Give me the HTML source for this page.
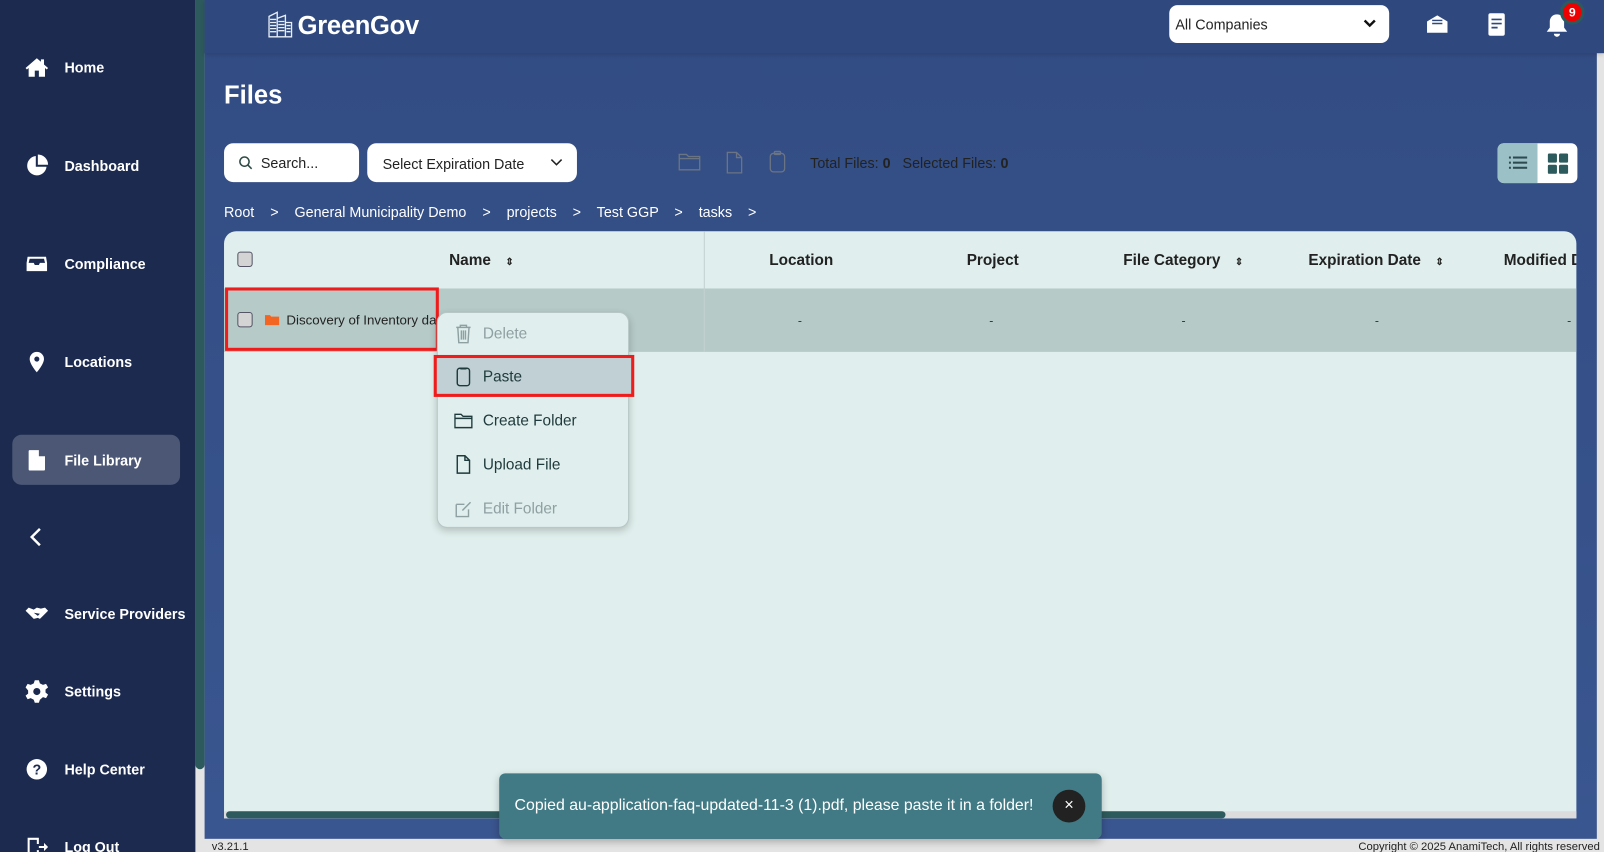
<!DOCTYPE html>
<html><head><meta charset="utf-8"><style>
*{box-sizing:border-box;margin:0;padding:0}
html,body{width:1604px;height:852px;overflow:hidden}
body{font-family:"Liberation Sans",Arial,sans-serif;background:#e4e4e4;position:relative}
#w{position:absolute;left:0;top:0;width:1568px;height:833px;transform:scale(1.02296);transform-origin:0 0}
.sb{position:absolute;left:0;top:0;width:191px;height:852px;background:#1c2a4f;color:#fff}
.sb .it{position:absolute;left:24px;display:flex;align-items:center;font-weight:bold;font-size:14px}
.sb .it svg{width:24px;height:24px;margin-right:15px;fill:#fff}
.strip{position:absolute;left:191px;top:0;width:9px;height:752px;background:#2d5a5c;border-radius:0 0 5px 5px}
.main{position:absolute;left:200px;top:0;width:1361px;height:820px;background:linear-gradient(180deg,#324c83,#3a5690)}
.hdr{position:absolute;left:200px;top:0;width:1368px;height:52px;background:#2f497f;box-shadow:0 2px 4px rgba(0,0,0,.15)}
.foot{position:absolute;top:820px;left:200px;width:1368px;height:32px;font-size:11px;color:#222}
.tbl{position:absolute;left:19px;top:226px;width:1322px;height:574px;background:#e0efed;border-radius:12px 12px 0 0;overflow:hidden}
.th{position:absolute;top:20px;font-weight:bold;font-size:15px;color:#222}
.cb{position:absolute;width:15px;height:15px;border:1px solid #556;border-radius:3px;background:#d4d4d4}
.dash{position:absolute;top:80px;font-size:12px;color:#333}
.menu{position:absolute;left:427px;top:305px;width:188px;height:211px;background:#e0efed;border:1px solid #b7c7c5;border-radius:10px;box-shadow:0 3px 8px rgba(0,0,0,.2)}
.mi{position:absolute;left:16px;display:flex;align-items:center;font-size:15px;color:#1f3a3c}
.mi svg{width:18px;height:20px;margin-right:10px;fill:none;stroke:currentColor;stroke-width:1.4}
</style></head><body><div id="w">
<div class="sb">
 <div class="it" style="top:54px"><svg viewBox="0 0 24 24"><path d="M12 3L1 12.5l1.3 1.4L4 12.5V21h6v-6h4v6h6v-8.5l1.7 1.4 1.3-1.4L19 9V4h-3v2.4z"/></svg>Home</div>
 <div class="it" style="top:150px"><svg viewBox="0 0 24 24"><path d="M11 2.5A9.5 9.5 0 1 0 21.5 13H11z"/><path d="M13 1v10h10A10 10 0 0 0 13 1z"/></svg>Dashboard</div>
 <div class="it" style="top:246px"><svg viewBox="0 0 24 24"><path d="M3 5h18l1 6v8H2v-8zm2 2l-1 4h5l1 2h4l1-2h5l-1-4z"/></svg>Compliance</div>
 <div class="it" style="top:342px"><svg viewBox="0 0 24 24"><path d="M12 2a7 7 0 0 0-7 7c0 5 7 13 7 13s7-8 7-13a7 7 0 0 0-7-7zm0 9.5a2.5 2.5 0 1 1 0-5 2.5 2.5 0 0 1 0 5z"/></svg>Locations</div>
 <div style="position:absolute;left:12px;top:425px;width:164px;height:49px;background:#4b5775;border-radius:9px"></div>
 <div class="it" style="top:438px"><svg viewBox="0 0 24 24"><path d="M5 2h9l6 6v13a1 1 0 0 1-1 1H5a1 1 0 0 1-1-1V3a1 1 0 0 1 1-1zm9 0v6h6"/></svg>File Library</div>
 <div class="it" style="top:513px"><svg viewBox="0 0 24 24" style="fill:none;stroke:#fff;stroke-width:2.4"><path d="M15 4l-8 8 8 8"/></svg></div>
 <div class="it" style="top:588px"><svg viewBox="0 0 24 24"><path d="M1 9l3-3 5 2 3-2 4 1 4-1 3 3-5 5-3 3-2-1-4 1-4-4zM9 11l4 3 2-2"/></svg>Service Providers</div>
 <div class="it" style="top:664px"><svg viewBox="0 0 24 24"><path d="M10 1h4l1 3 3 1.5 3-1 2 3.5-2.5 2v3l2.5 2-2 3.5-3-1L15 20l-1 3h-4l-1-3-3-1.5-3 1-2-3.5 2.5-2v-3L1 8l2-3.5 3 1L9 4zm2 7.5a3.5 3.5 0 1 0 0 7 3.5 3.5 0 0 0 0-7z"/></svg>Settings</div>
 <div class="it" style="top:740px"><svg viewBox="0 0 24 24"><circle cx="12" cy="12" r="10"/><text x="12" y="17" font-size="14" font-weight="bold" text-anchor="middle" fill="#1c2a4f" font-family="Liberation Sans">?</text></svg>Help Center</div>
 <div class="it" style="top:816px"><svg viewBox="0 0 24 24"><path d="M3 3h11v6h-2V5H5v14h7v-4h2v6H3zM14 11h5V8l4 4-4 4v-3h-5z"/></svg>Log Out</div>
</div>
<div class="strip"></div>
<div class="main">
 <div style="position:absolute;left:19px;top:79px;color:#fff;font-size:25px;font-weight:bold">Files</div>
 <div style="position:absolute;left:19px;top:140px;width:132px;height:38px;background:#fff;border-radius:9px;font-size:14px;color:#222;padding:11px 0 0 36px">Search...
  <svg style="position:absolute;left:14px;top:12px" width="14" height="14" viewBox="0 0 14 14" fill="none" stroke="#2d4a44" stroke-width="1.5"><circle cx="6" cy="6" r="4.5"/><path d="M9.5 9.5l3.5 3.5"/></svg></div>
 <div style="position:absolute;left:159px;top:140px;width:205px;height:38px;background:#fff;border-radius:9px;font-size:14px;color:#222;padding:12px 0 0 15px">Select Expiration Date
  <svg style="position:absolute;right:14px;top:15px" width="12" height="8" viewBox="0 0 12 8"><path d="M1 1l5 5 5-5" stroke="#222" stroke-width="1.5" fill="none"/></svg></div>
 <svg style="position:absolute;left:463px;top:149px" width="22" height="18" viewBox="0 0 22 18" fill="none" stroke="#6b7483" stroke-width="1.3"><path d="M1 2h7l2 2h11v13H1zM1 6h20"/></svg>
 <svg style="position:absolute;left:509px;top:148px" width="18" height="22" viewBox="0 0 18 22" fill="none" stroke="#6b7483" stroke-width="1.3"><path d="M2 1h9l5 5v15H2zM11 1v5h5"/></svg>
 <svg style="position:absolute;left:551px;top:147px" width="18" height="22" viewBox="0 0 18 22" fill="none" stroke="#6b7483" stroke-width="1.3"><rect x="2" y="3" width="14" height="18" rx="3"/><rect x="6" y="1" width="6" height="3" rx="1"/></svg>
 <div style="position:absolute;left:592px;top:151px;font-size:14px;color:#222">Total Files: <b>0</b> &nbsp; Selected Files: <b>0</b></div>
 <div style="position:absolute;left:1264px;top:140px;width:78px;height:39px;border-radius:6px;overflow:hidden;background:#fff">
  <div style="position:absolute;left:0;top:0;width:39px;height:39px;background:#9bc1c6"></div>
  <svg style="position:absolute;left:11px;top:12px" width="18" height="15" viewBox="0 0 18 15" fill="#2d4a50"><rect x="0" y="1" width="2" height="2"/><rect x="4" y="1" width="14" height="2"/><rect x="0" y="6" width="2" height="2"/><rect x="4" y="6" width="14" height="2"/><rect x="0" y="11" width="2" height="2"/><rect x="4" y="11" width="14" height="2"/></svg>
  <svg style="position:absolute;left:49px;top:10px" width="20" height="20" viewBox="0 0 20 20" fill="#2d5a5c"><rect x="0" y="0" width="9" height="9" rx="1.5"/><rect x="11" y="0" width="9" height="9" rx="1.5"/><rect x="0" y="11" width="9" height="9" rx="1.5"/><rect x="11" y="11" width="9" height="9" rx="1.5"/></svg>
 </div>
 <div style="position:absolute;left:19px;top:199px;font-size:14px;color:#fff;white-space:pre">Root    &gt;    General Municipality Demo    &gt;    projects    &gt;    Test GGP    &gt;    tasks    &gt;</div>
 <div class="tbl">
  <div class="cb" style="left:13px;top:20px"></div>
  <div class="th" style="left:220px">Name <span style="font-size:10px;margin-left:10px">&#8661;</span></div>
  <div class="th" style="left:533px">Location</div>
  <div class="th" style="left:726px">Project</div>
  <div class="th" style="left:879px">File Category <span style="font-size:10px;margin-left:10px">&#8661;</span></div>
  <div class="th" style="left:1060px">Expiration Date <span style="font-size:10px;margin-left:10px">&#8661;</span></div>
  <div class="th" style="left:1251px;white-space:nowrap">Modified D</div>
  <div style="position:absolute;left:0;top:56px;width:1322px;height:62px;background:#b6cac8"></div>
  <div style="position:absolute;left:469px;top:0;width:1px;height:118px;background:#c2d2d0"></div>
  <div class="cb" style="left:13px;top:79px"></div>
  <svg style="position:absolute;left:40px;top:81px" width="14" height="11" viewBox="0 0 14 11"><path d="M0 1h5l1 1.5h8V11H0z" fill="#f26522"/></svg>
  <div style="position:absolute;left:61px;top:79px;font-size:13px;color:#222;white-space:nowrap;width:148px;overflow:hidden">Discovery of Inventory data</div>
  <div class="dash" style="left:561px">-</div><div class="dash" style="left:748px">-</div><div class="dash" style="left:936px">-</div><div class="dash" style="left:1125px">-</div><div class="dash" style="left:1313px">-</div>
  <div style="position:absolute;left:0;top:567px;width:1322px;height:7px;background:#dcdcdc"></div>
  <div style="position:absolute;left:2px;top:567px;width:977px;height:7px;background:#2d5a5c;border-radius:4px"></div>
 </div>
 <div style="position:absolute;left:20px;top:281px;width:209px;height:62px;border:3px solid #f01c1c"></div>
</div>
<div class="hdr">
  <svg style="position:absolute;left:60px;top:10px" width="28" height="28" viewBox="0 0 28 28" fill="none" stroke="#e8eef5" stroke-width="1.3"><path d="M3 6l8-4v24H3zM11 8l8-3v21h-8zM19 12h6v14h-6z"/><path d="M4 9h6M4 12h6M4 15h6M4 18h6M4 21h6M12 11h6M12 14h6M12 17h6M12 20h6M20 15h4M20 18h4M20 21h4"/></svg>
  <div style="position:absolute;left:91px;top:11px;color:#fff;font-size:25px;font-weight:bold;letter-spacing:-.3px">GreenGov</div>
  <div style="position:absolute;left:943px;top:5px;width:215px;height:37px;background:#fff;border-radius:8px;font-size:14px;color:#222;padding:11px 6px">All Companies
   <svg style="position:absolute;right:12px;top:13px" width="14" height="10" viewBox="0 0 14 10"><path d="M2 2l5 5 5-5" stroke="#111" stroke-width="2.4" fill="none"/></svg></div>
  <svg style="position:absolute;left:1194px;top:13px" width="22" height="22" viewBox="0 0 22 22"><path d="M1 8l10-6 10 6v11H1z" fill="#fff"/><path d="M6 7h10M6 10h10" stroke="#2f497f" stroke-width="1.4"/></svg>
  <svg style="position:absolute;left:1254px;top:12px" width="18" height="24" viewBox="0 0 18 24"><rect x="1" y="1" width="16" height="22" rx="2" fill="#fff"/><path d="M4 7h10M4 11h10M4 15h6" stroke="#2f497f" stroke-width="1.6"/></svg>
  <svg style="position:absolute;left:1310px;top:12px" width="24" height="26" viewBox="0 0 24 26"><path d="M12 2c-4 0-7 3-7 7v6l-3 4h20l-3-4V9c0-4-3-7-7-7zM9 21a3 3 0 0 0 6 0z" fill="#fff"/></svg>
  <div style="position:absolute;left:1325px;top:0;width:24px;height:24px;border-radius:50%;background:#2d5a5c;padding:3px"><div style="width:18px;height:18px;border-radius:50%;background:#e00;color:#fff;font-size:12px;font-weight:bold;text-align:center;line-height:18px">9</div></div>
</div>
<div class="foot"><span style="position:absolute;left:7px;top:2px">v3.21.1</span><span style="position:absolute;right:4px;top:2px">Copyright © 2025 AnamiTech, All rights reserved</span></div>
<div class="menu">
 <div style="position:absolute;left:-4px;top:41px;width:196px;height:41px;background:#c0d0d4;border:3px solid #f01c1c"></div>
 <div class="mi" style="top:10px;color:#8fa0a3"><svg viewBox="0 0 18 20"><path d="M2 4h14M6 4V2h6v2M3.5 4l1 15h9l1-15M7 7v9M9 7v9M11 7v9"/></svg>Delete</div>
 <div class="mi" style="top:52px"><svg viewBox="0 0 18 20"><rect x="3" y="2" width="12" height="17" rx="2.5"/><path d="M6 2.5h6"/></svg>Paste</div>
 <div class="mi" style="top:95px"><svg viewBox="0 0 18 20"><path d="M0.7 4h6l2 2h8.6v11H.7zM.7 8h16.6"/></svg>Create Folder</div>
 <div class="mi" style="top:138px"><svg viewBox="0 0 18 20"><path d="M3 1.5h7.5L15 6v12.5H3zM10.5 1.5V6H15"/></svg>Upload File</div>
 <div class="mi" style="top:181px;color:#8fa0a3"><svg viewBox="0 0 18 20"><path d="M2 6h8M2 6v12h12v-7M8 12l8-8"/></svg>Edit Folder</div>
</div>
<div style="position:absolute;left:488px;top:756px;width:589px;height:64px;background:#417a84;border-radius:6px;box-shadow:0 3px 8px rgba(0,0,0,.25)">
 <div style="position:absolute;left:15px;top:23px;color:#fff;font-size:15.5px;white-space:nowrap">Copied au-application-faq-updated-11-3 (1).pdf, please paste it in a folder!</div>
 <div style="position:absolute;left:541px;top:16px;width:32px;height:32px;border-radius:50%;background:#222;color:#fff;text-align:center;line-height:32px;font-size:16px">×</div>
</div>
</div></body></html>
